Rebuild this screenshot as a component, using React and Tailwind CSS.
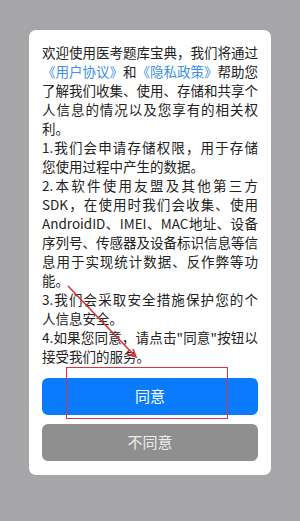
import React from "react";

const paragraphs = [
  [
    "欢迎使用医考题库宝典，我们将通过",
    "LINKS",
    "了解我们收集、使用、存储和共享个",
    "人信息的情况以及您享有的相关权",
    "利。",
  ],
  ["1.我们会申请存储权限，用于存储", "您使用过程中产生的数据。"],
  [
    "2.本软件使用友盟及其他第三方",
    "SDK，在使用时我们会收集、使用",
    "AndroidID、IMEI、MAC地址、设备",
    "序列号、传感器及设备标识信息等信",
    "息用于实现统计数据、反作弊等功",
    "能。",
  ],
  ["3.我们会采取安全措施保护您的个", "人信息安全。"],
  ["4.如果您同意，请点击\"同意\"按钮以", "接受我们的服务。"],
];

const Line = ({ text, last }) => {
  const cls = last ? "text-left" : "text-justify [text-align-last:justify]";
  if (text === "LINKS") {
    return (
      <div className={cls}>
        <span className="text-[#3d8fe8]">《用户协议》</span>和
        <span className="text-[#3d8fe8]">《隐私政策》</span>帮助您
      </div>
    );
  }
  return <div className={cls}>{text}</div>;
};

export default function App() {
  return (
    <div className="relative min-h-screen w-[300px] bg-[#a6a5a7] pt-[30px] pb-[48px] font-['Noto_Sans_CJK_SC','Noto_Sans',sans-serif]">
      <div className="mx-auto w-[242px] rounded-[7px] bg-white px-[13px] pt-[13px] pb-[14px]">
        <div className="text-[13.5px] leading-[19px] text-[#222]">
          {paragraphs.map((p, i) => (
            <div key={i}>
              {p.map((t, j) => (
                <Line key={j} text={t} last={j === p.length - 1} />
              ))}
            </div>
          ))}
        </div>
        <div className="mt-[12px] flex flex-col gap-[9px]">
          <button className="h-[37px] w-full rounded-[6px] bg-[#0b7bfe] text-[15px] text-white">
            同意
          </button>
          <button className="h-[37px] w-full rounded-[6px] bg-[#8f8f90] text-[15px] text-[#ececec]">
            不同意
          </button>
        </div>
      </div>

      {/* red annotation overlay */}
      <div className="pointer-events-none absolute left-[66px] top-[367px] h-[52px] w-[162px] border border-[#d8343a]" />
      <svg
        className="pointer-events-none absolute left-0 top-0"
        width="300"
        height="521"
        viewBox="0 0 300 521"
      >
        <line x1="68" y1="286" x2="135" y2="356" stroke="#d8343a" strokeWidth="1.6" />
        <path d="M128 354 L136 357 L133 349" fill="none" stroke="#d8343a" strokeWidth="1.6" />
      </svg>
    </div>
  );
}
